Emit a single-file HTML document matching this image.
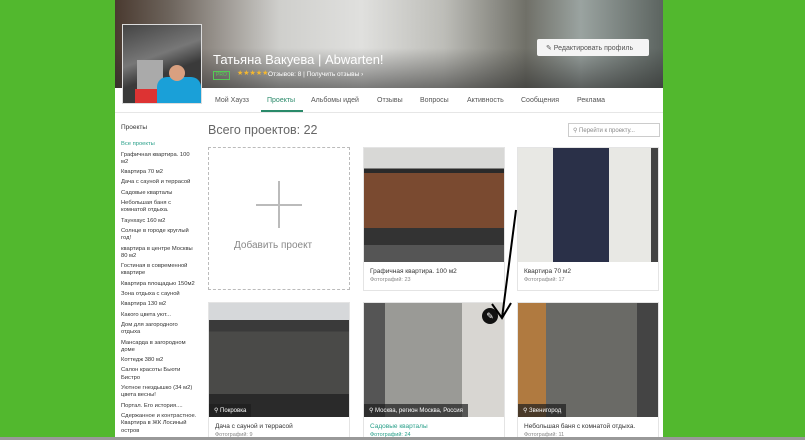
<!DOCTYPE html>
<html><head><meta charset="utf-8"><style>
*{margin:0;padding:0;box-sizing:border-box}
body{width:805px;height:440px;overflow:hidden;background:#52b82e;font-family:"Liberation Sans",sans-serif;position:relative}
.page{position:absolute;left:115px;top:0;width:548px;height:440px;background:#fff;overflow:hidden}
.hdr{position:absolute;left:0;top:0;width:548px;height:88px;background:linear-gradient(90deg,#4a3a30 0%,#6d645c 10%,#cfcfcc 30%,#e0e0de 45%,#bdbdb8 60%,#707068 75%,#9aa3a0 85%,#5c6460 100%)}
.hdr:after{content:"";position:absolute;left:0;right:0;bottom:0;height:40px;background:linear-gradient(transparent,rgba(40,40,40,.55))}
.av{position:absolute;left:7px;top:24px;width:80px;height:80px;border:1px solid #ddd;background:linear-gradient(160deg,#444 0%,#777 40%,#3a3a3a 60%);z-index:3;overflow:hidden}
.nav{position:absolute;top:88px;left:0;width:548px;height:25px;border-bottom:1px solid #e6e6e6;font-size:7px;color:#555}
.nav span{position:absolute;top:9px}
.t{position:absolute;white-space:nowrap}
.side{position:absolute;left:6px;top:124px;font-size:5.8px;color:#333;line-height:7.3px;width:76px}
.side div{margin-bottom:3px}
.card{position:absolute;width:142px;border:1px solid #e4e4e4;background:#fff}
.img{height:114px;position:relative}
.cap{padding:6px 6px 0;font-size:6.5px;color:#333;height:28px}
.cap small{display:block;font-size:5.5px;color:#888;margin-top:2px}
.loc{position:absolute;left:0;bottom:0;background:rgba(30,30,30,.7);color:#fff;font-size:6px;padding:3px 5px}
</style></head><body>
<div class="page">
<div class="hdr"></div>
<div class="av"><div style="position:absolute;left:14px;top:35px;width:26px;height:30px;background:#aaa"></div><div style="position:absolute;left:12px;top:64px;width:28px;height:16px;background:#d33"></div><div style="position:absolute;left:34px;top:52px;width:44px;height:28px;background:#1aa0d8;border-radius:10px 10px 0 0"></div><div style="position:absolute;left:46px;top:40px;width:16px;height:16px;background:#d9a080;border-radius:50%"></div></div>
<div class="t" style="left:98px;top:52px;font-size:13px;color:#fff">Татьяна Вакуева | Abwarten!</div>
<div class="t" style="left:98px;top:71px;font-size:5px;color:#5c5;border:1px solid #5c5;padding:0 2px;line-height:7px">PRO</div>
<div class="t" style="left:122px;top:69px;font-size:7px;color:#f5b82e">★★★★★</div>
<div class="t" style="left:153px;top:71px;font-size:6.5px;color:#fff">Отзывов: 8 | Получить отзывы ›</div>
<div class="t" style="left:422px;top:39px;width:112px;height:17px;background:#f4f4f4;border-radius:2px;font-size:7px;color:#555;padding:5px 0 0 9px">✎ Редактировать профиль</div>
<div class="nav"><span style="left:100px">Мой Хаузз</span><span style="left:152px;color:#2a8a6a">Проекты</span><span style="left:196px">Альбомы идей</span><span style="left:262px">Отзывы</span><span style="left:305px">Вопросы</span><span style="left:352px">Активность</span><span style="left:406px">Сообщения</span><span style="left:462px">Реклама</span>
<div style="position:absolute;left:146px;top:22px;width:42px;height:2px;background:#2a8a6a"></div></div>
<div class="side"><div style="font-size:6.5px;margin-bottom:10px">Проекты</div><div style="color:#2aa08a">Все проекты</div><div>Графичная квартира. 100 м2</div><div>Квартира 70 м2</div><div>Дача с сауной и террасой</div><div>Садовые кварталы</div><div>Небольшая баня с комнатой отдыха.</div><div>Таунхаус 160 м2</div><div>Солнце в городе круглый год!</div><div>квартира в центре Москвы 80 м2</div><div>Гостиная в современной квартире</div><div>Квартира площадью 150м2</div><div>Зона отдыха с сауной</div><div>Квартира 130 м2</div><div>Какого цвета уют...</div><div>Дом для загородного отдыха</div><div>Мансарда в загородном доме</div><div>Коттедж 380 м2</div><div>Салон красоты Бьюти Бистро</div><div>Уютное гнездышко (34 м2) цвета весны!</div><div>Портал. Его история....</div><div>Сдержанное и контрастное. Квартира в ЖК Лосиный остров</div></div>
<div class="t" style="left:93px;top:123px;font-size:12.5px;color:#666">Всего проектов: 22</div>
<div class="t" style="left:453px;top:123px;width:92px;height:14px;border:1px solid #ccc;font-size:6px;color:#888;padding:3px 0 0 4px">⚲ Перейти к проекту...</div>
<div style="position:absolute;left:93px;top:147px;width:142px;height:143px;border:1px dashed #bbb"><div style="position:absolute;left:47px;top:56px;width:46px;height:1.5px;background:#bbb"></div><div style="position:absolute;left:69px;top:33px;width:1.5px;height:47px;background:#bbb"></div><div class="t" style="left:25px;top:92px;font-size:10px;color:#888">Добавить проект</div></div>
<div class="card" style="left:248px;top:147px"><div class="img" style="background:linear-gradient(#d8d8d6 0 18%,#2a2a2a 18% 22%,#7a4a30 22% 70%,#333 70% 85%,#555 85%)"></div><div class="cap">Графичная квартира. 100 м2<small>Фотографий: 23</small></div></div>
<div class="card" style="left:402px;top:147px"><div class="img" style="background:linear-gradient(90deg,#e8e8e4 0 25%,#2a3048 25% 65%,#e8e8e4 65% 95%,#444 95%)"></div><div class="cap">Квартира 70 м2<small>Фотографий: 17</small></div></div>
<div class="card" style="left:93px;top:302px"><div class="img" style="background:linear-gradient(#d6d8da 0 15%,#3a3a3a 15% 25%,#4a4a48 25% 80%,#2a2a2a 80%)"><div class="loc">⚲ Покровка</div></div><div class="cap">Дача с сауной и террасой<small>Фотографий: 9</small></div></div>
<div class="card" style="left:248px;top:302px"><div class="img" style="background:linear-gradient(90deg,#555 0 15%,#9a9a96 15% 70%,#d8d6d2 70%)"><div class="loc">⚲ Москва, регион Москва, Россия</div><div style="position:absolute;left:118px;top:5px;width:16px;height:16px;border-radius:50%;background:#111;color:#fff;font-size:9px;text-align:center;line-height:16px">✎</div></div><div class="cap" style="color:#2aa08a">Садовые кварталы<small style="color:#2aa08a">Фотографий: 24</small></div></div>
<div class="card" style="left:402px;top:302px"><div class="img" style="background:linear-gradient(90deg,#b07a40 0 20%,#6a6a66 20% 85%,#444 85%)"><div class="loc">⚲ Звенигород</div></div><div class="cap">Небольшая баня с комнатой отдыха.<small>Фотографий: 11</small></div></div>
</div>
<svg style="position:absolute;left:0;top:0" width="805" height="440"><path d="M516 210 L502 318 M492 304 L502 318 L511 303" stroke="#000" stroke-width="2" fill="none"/></svg>
<div style="position:absolute;left:0;top:437px;width:805px;height:3px;background:#999"></div>
</body></html>
